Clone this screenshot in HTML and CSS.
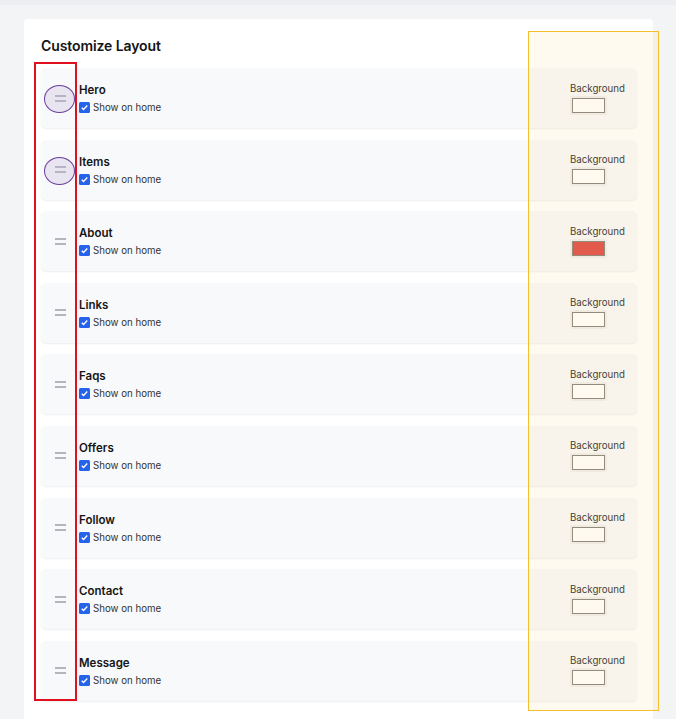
FILE: index.html
```html
<!DOCTYPE html>
<html lang="en">
<head>
    <meta charset="utf-8">
    <title>Customize Layout</title>
    <link rel="stylesheet" href="styles.css">
</head>
<body>
    <div class="panel">
        <h2 class="panel-title">Customize Layout</h2>

        <div class="sections">
            <div class="section">
                <div class="handle"><span class="grip"></span><span class="ring"></span></div>
                <div class="info">
                    <div class="name">Hero</div>
                    <label class="toggle"><span class="check"><svg viewBox="0 0 12 12"><path d="M3 6.2l2 2 4-4.4"/></svg></span>Show on home</label>
                </div>
                <div class="bg-pick">
                    <span class="bg-label">Background</span>
                    <span class="swatch"><span class="swatch-color"></span></span>
                </div>
            </div>

            <div class="section">
                <div class="handle"><span class="grip"></span><span class="ring"></span></div>
                <div class="info">
                    <div class="name">Items</div>
                    <label class="toggle"><span class="check"><svg viewBox="0 0 12 12"><path d="M3 6.2l2 2 4-4.4"/></svg></span>Show on home</label>
                </div>
                <div class="bg-pick">
                    <span class="bg-label">Background</span>
                    <span class="swatch"><span class="swatch-color"></span></span>
                </div>
            </div>

            <div class="section">
                <div class="handle"><span class="grip"></span></div>
                <div class="info">
                    <div class="name">About</div>
                    <label class="toggle"><span class="check"><svg viewBox="0 0 12 12"><path d="M3 6.2l2 2 4-4.4"/></svg></span>Show on home</label>
                </div>
                <div class="bg-pick">
                    <span class="bg-label">Background</span>
                    <span class="swatch"><span class="swatch-color red"></span></span>
                </div>
            </div>

            <div class="section">
                <div class="handle"><span class="grip"></span></div>
                <div class="info">
                    <div class="name">Links</div>
                    <label class="toggle"><span class="check"><svg viewBox="0 0 12 12"><path d="M3 6.2l2 2 4-4.4"/></svg></span>Show on home</label>
                </div>
                <div class="bg-pick">
                    <span class="bg-label">Background</span>
                    <span class="swatch"><span class="swatch-color"></span></span>
                </div>
            </div>

            <div class="section">
                <div class="handle"><span class="grip"></span></div>
                <div class="info">
                    <div class="name">Faqs</div>
                    <label class="toggle"><span class="check"><svg viewBox="0 0 12 12"><path d="M3 6.2l2 2 4-4.4"/></svg></span>Show on home</label>
                </div>
                <div class="bg-pick">
                    <span class="bg-label">Background</span>
                    <span class="swatch"><span class="swatch-color"></span></span>
                </div>
            </div>

            <div class="section">
                <div class="handle"><span class="grip"></span></div>
                <div class="info">
                    <div class="name">Offers</div>
                    <label class="toggle"><span class="check"><svg viewBox="0 0 12 12"><path d="M3 6.2l2 2 4-4.4"/></svg></span>Show on home</label>
                </div>
                <div class="bg-pick">
                    <span class="bg-label">Background</span>
                    <span class="swatch"><span class="swatch-color"></span></span>
                </div>
            </div>

            <div class="section">
                <div class="handle"><span class="grip"></span></div>
                <div class="info">
                    <div class="name">Follow</div>
                    <label class="toggle"><span class="check"><svg viewBox="0 0 12 12"><path d="M3 6.2l2 2 4-4.4"/></svg></span>Show on home</label>
                </div>
                <div class="bg-pick">
                    <span class="bg-label">Background</span>
                    <span class="swatch"><span class="swatch-color"></span></span>
                </div>
            </div>

            <div class="section">
                <div class="handle"><span class="grip"></span></div>
                <div class="info">
                    <div class="name">Contact</div>
                    <label class="toggle"><span class="check"><svg viewBox="0 0 12 12"><path d="M3 6.2l2 2 4-4.4"/></svg></span>Show on home</label>
                </div>
                <div class="bg-pick">
                    <span class="bg-label">Background</span>
                    <span class="swatch"><span class="swatch-color"></span></span>
                </div>
            </div>

            <div class="section">
                <div class="handle"><span class="grip"></span></div>
                <div class="info">
                    <div class="name">Message</div>
                    <label class="toggle"><span class="check"><svg viewBox="0 0 12 12"><path d="M3 6.2l2 2 4-4.4"/></svg></span>Show on home</label>
                </div>
                <div class="bg-pick">
                    <span class="bg-label">Background</span>
                    <span class="swatch"><span class="swatch-color"></span></span>
                </div>
            </div>
        </div>

        <!-- highlight boxes drawn over the list -->
        <div class="mark-handles"></div>
        <div class="mark-colors"></div>
    </div>
</body>
</html>
```

FILE: styles.css
```css
*{
    margin: 0;
    box-sizing: border-box;
}
body{
    background-color: #f3f4f6;
    border-top: 5px solid #eceef1;
    padding: 14px 23px 0 24px;
    font-family: Inter, "Noto Sans", sans-serif;
    color: #151515;
    overflow: hidden;
    height: 719px;
}

.panel{
    position: relative;
    background-color: #ffffff;
    border-radius: 4px;
    padding: 18px 16px 20px 17px;
    min-height: 720px;
}
.panel-title{
    font-size: 14px;
    font-weight: 600;
    line-height: 18px;
    margin-bottom: 13px;
    letter-spacing: -0.1px;
}

.sections{
    display: flex;
    flex-direction: column;
    gap: 11.6px;
}
.section{
    height: 60px;
    display: flex;
    align-items: center;
    background-color: #f8f9fa;
    border-radius: 5px;
    box-shadow: 0 1px 2px rgba(0, 0, 0, 0.07);
    padding-right: 12px;
}

.handle{
    position: relative;
    width: 38px;
    height: 100%;
    display: flex;
    justify-content: center;
    align-items: center;
}
.grip{
    width: 11px;
    height: 7px;
    border-top: 2px solid #b4b5bd;
    border-bottom: 2px solid #b4b5bd;
    margin-left: 1px;
}
.ring{
    position: absolute;
    left: 3px;
    top: 17px;
    width: 31px;
    height: 28px;
    border: 1px solid #6a3f9e;
    border-radius: 50%;
    background-color: rgba(190, 175, 215, 0.28);
}

.info{
    flex: 1;
    display: flex;
    flex-direction: column;
    gap: 3px;
    padding-top: 1px;
}
.name{
    font-size: 11.5px;
    font-weight: 600;
    line-height: 15px;
}
.toggle{
    display: flex;
    align-items: center;
    gap: 3px;
    font-size: 9.7px;
    color: #333;
    line-height: 13px;
}
.check{
    width: 11px;
    height: 11px;
    border-radius: 1.5px;
    background-color: #2563eb;
    display: flex;
}
.check svg{
    width: 11px;
    height: 11px;
    fill: none;
    stroke: #ffffff;
    stroke-width: 1.5;
}

.bg-pick{
    display: flex;
    flex-direction: column;
    align-items: flex-start;
    gap: 1px;
    margin-top: 0;
}
.bg-label{
    font-size: 9.7px;
    color: #333;
    line-height: 13px;
}
.swatch{
    width: 37px;
    height: 19px;
    padding: 2px;
    background-color: #efefef;
    border-radius: 2px;
}
.swatch-color{
    display: block;
    height: 100%;
    border: 1px solid #8b8680;
    background-color: #ffffff;
}
.swatch-color.red{
    background-color: #e0504a;
}

.mark-handles{
    position: absolute;
    left: 10px;
    top: 43px;
    width: 43px;
    height: 639px;
    border: 2px solid #e2101f;
    pointer-events: none;
}
.mark-colors{
    position: absolute;
    left: 504px;
    top: 12px;
    width: 131px;
    height: 680px;
    border: 1.5px solid #f4bf2a;
    background-color: rgba(255, 205, 90, 0.09);
    pointer-events: none;
}
```
